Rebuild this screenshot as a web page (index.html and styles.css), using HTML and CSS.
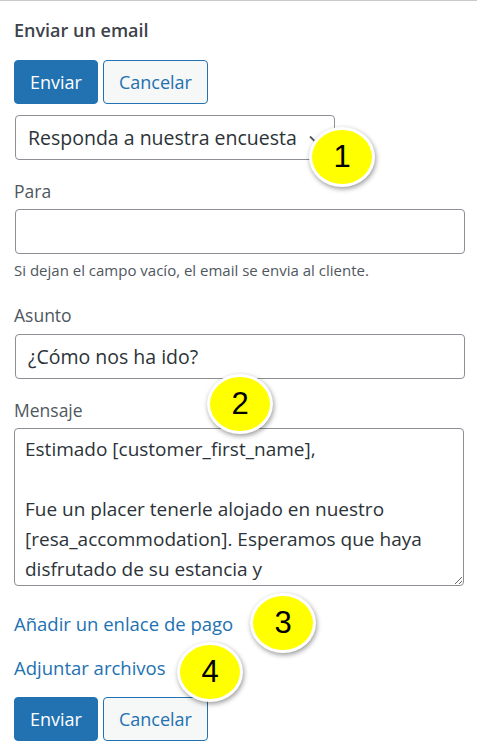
FILE: index.html
```html
<!DOCTYPE html>
<html lang="es">
<head>
<meta charset="utf-8">
<title>Enviar un email</title>
<link rel="stylesheet" href="styles.css">
</head>
<body>
<div class="panel">
  <h2 class="title">Enviar un email</h2>
  <div class="actions">
    <button class="btn btn-primary">Enviar</button>
    <button class="btn btn-secondary">Cancelar</button>
  </div>
  <div class="select">
    <span class="select-text">Responda a nuestra encuesta</span>
    <svg class="chevron" width="14" height="10" viewBox="0 0 14 10"><path d="M2 2.5 L7 7.5 L12 2.5" fill="none" stroke="#50575e" stroke-width="1.8"/></svg>
  </div>
  <label class="label label-para">Para</label>
  <input class="field" type="text" value="">
  <p class="help">Si dejan el campo vacío, el email se envia al cliente.</p>
  <label class="label label-asunto">Asunto</label>
  <input class="field" type="text" value="¿Cómo nos ha ido?">
  <label class="label label-mensaje">Mensaje</label>
  <textarea class="message">Estimado [customer_first_name],

Fue un placer tenerle alojado en nuestro [resa_accommodation]. Esperamos que haya disfrutado de su estancia y</textarea>
  <a class="link link-pago" href="#">Añadir un enlace de pago</a>
  <a class="link link-adjuntar" href="#">Adjuntar archivos</a>
  <div class="actions actions-bottom">
    <button class="btn btn-primary">Enviar</button>
    <button class="btn btn-secondary">Cancelar</button>
  </div>

  <span class="badge badge-1">1</span>
  <span class="badge badge-2">2</span>
  <span class="badge badge-3">3</span>
  <span class="badge badge-4">4</span>
</div>
</body>
</html>
```

FILE: styles.css
```css
* { box-sizing: border-box; }
html, body { margin: 0; padding: 0; background: #fff; }
body { font-family: "Open Sans", "Noto Sans", sans-serif; color: #3c434a; }

.panel {
  position: relative;
  border-top: 1px solid #c9cacd;
  padding: 17px 12px 0 14px;
  display: flex;
  flex-direction: column;
  align-items: flex-start;
  min-height: 753px;
}

.title {
  margin: 0;
  font-size: 18px;
  line-height: 24px;
  font-weight: 600;
  color: #3c434a;
}

.actions { display: flex; gap: 5px; margin-top: 18px; }
.actions-bottom { margin-top: 18px; }

.btn {
  font-family: inherit;
  font-size: 18px;
  height: 44px;
  padding: 0 15px;
  border-radius: 4px;
  border: 1px solid #2271b1;
  cursor: pointer;
}
.btn-primary { background: #2271b1; color: #fff; }
.btn-secondary { background: #f6f7f7; color: #2271b1; }

.select {
  margin-top: 11px;
  margin-left: 1px;
  width: 320px;
  height: 45px;
  border: 1px solid #8c8f94;
  border-radius: 4px;
  display: flex;
  align-items: center;
  justify-content: space-between;
  padding: 0 12px 0 12px;
  font-size: 19.5px;
  color: #2c3338;
  white-space: nowrap;
}
.chevron { flex: none; margin-top: 2px; }

.label {
  font-size: 17.5px;
  line-height: 22px;
  color: #50575e;
}
.label-para { margin-top: 20px; }
.label-asunto { margin-top: 25px; }
.label-mensaje { margin-top: 20px; }

.field {
  margin-top: 7px;
  margin-left: 1px;
  width: 450px;
  height: 45px;
  border: 1px solid #8c8f94;
  border-radius: 4px;
  padding: 0 12px;
  font-family: inherit;
  font-size: 19.5px;
  color: #2c3338;
  outline: none;
}
.label-asunto + .field { margin-top: 8px; }

.help {
  margin: 7px 0 0;
  font-size: 15px;
  line-height: 18px;
  color: #50575e;
}

.message {
  margin-top: 7px;
  width: 450px;
  height: 158px;
  border: 1px solid #8c8f94;
  border-radius: 4px;
  padding: 5px 10px;
  font-family: inherit;
  font-size: 19px;
  line-height: 30px;
  color: #2c3338;
  overflow: hidden;
  resize: both;
  outline: none;
}

.link {
  font-size: 18.5px;
  line-height: 22px;
  color: #2271b1;
  text-decoration: none;
}
.link-pago { margin-top: 27px; }
.link-adjuntar { margin-top: 22px; }

.badge {
  position: absolute;
  width: 66px;
  height: 60px;
  margin: -30px 0 0 -33px;
  border-radius: 50%;
  background: #ffff00;
  border: 3px solid #fff;
  box-shadow: 1px 2px 5px rgba(0, 0, 0, 0.4);
  display: flex;
  align-items: center;
  justify-content: center;
  font-family: "Liberation Sans", Arial, sans-serif;
  font-size: 31px;
  color: #000;
}
.badge-1 { left: 342px; top: 156px; }
.badge-2 { left: 240px; top: 403px; }
.badge-3 { left: 283px; top: 622px; }
.badge-4 { left: 210px; top: 671px; }
```
